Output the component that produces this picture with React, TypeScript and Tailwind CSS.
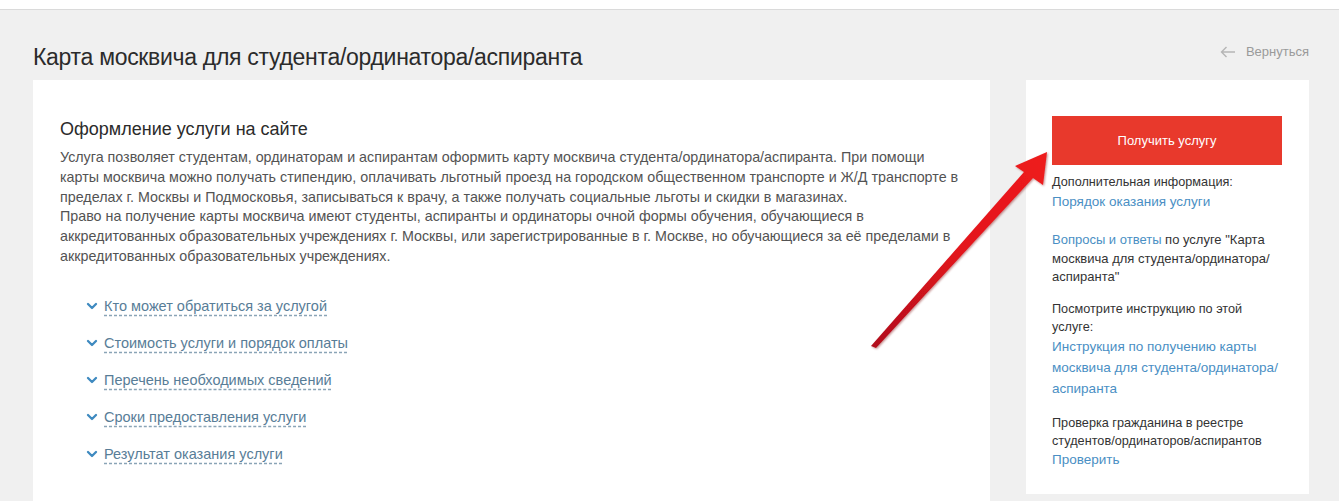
import { ChevronDown } from "lucide-react"

const accordion = [
  "Кто может обратиться за услугой",
  "Стоимость услуги и порядок оплаты",
  "Перечень необходимых сведений",
  "Сроки предоставления услуги",
  "Результат оказания услуги",
]

function RedArrow() {
  // hand-drawn pointer over the page, pointing at the button
  return (
    <svg className="pointer-events-none absolute left-0 top-0" width="1339" height="501" viewBox="0 0 1339 501">
      <defs>
        <linearGradient id="arrowFill" x1="0" y1="1" x2="1" y2="0">
          <stop offset="0" stopColor="#b0101a" />
          <stop offset="0.5" stopColor="#e3131b" />
          <stop offset="1" stopColor="#ee1c1c" />
        </linearGradient>
        <filter id="arrowShadow" x="-10%" y="-10%" width="120%" height="120%">
          <feDropShadow dx="1" dy="1" stdDeviation="1.2" floodColor="#7a0000" floodOpacity="0.45" />
        </filter>
      </defs>
      <polygon
        points="871,346 1024,172 1015,166 1047,152 1043,185 1033,178 876,348"
        fill="url(#arrowFill)"
        filter="url(#arrowShadow)"
      />
    </svg>
  )
}

export default function App() {
  return (
    <div className="relative h-[501px] w-full overflow-hidden bg-[#f0f0f0] font-['Liberation_Sans',Arial,sans-serif]">
      {/* top bar */}
      <div className="h-[10px] border-b border-[#dadada] bg-white"></div>

      {/* title row */}
      <div className="flex items-start justify-between pl-[33px] pr-[30px] pt-[33px]">
        <h1 className="text-[23px] leading-[28px] tracking-[-0.3px] text-[#2b2b2b]">
          Карта москвича для студента/ординатора/аспиранта
        </h1>
        <a className="mt-[-1px] flex items-center gap-[10px] text-[13px] text-[#9a9a9a]">
          <svg width="16" height="12" viewBox="0 0 16 12" fill="none" stroke="#b5b5b5" strokeWidth="1.4">
            <path d="M15 6H1.5M6.5 1L1.5 6l5 5" />
          </svg>
          Вернуться
        </a>
      </div>

      {/* content */}
      <div className="mt-[9px] flex gap-[36px] pl-[33px]">
        <div className="h-[440px] w-[957px] bg-white pl-[27px] pr-[30px] pt-[37px]">
          <h2 className="text-[18px] leading-[24px] text-[#2b2b2b]">Оформление услуги на сайте</h2>
          <p className="mt-[7px] max-w-[900px] text-[14.3px] leading-[19.8px] text-[#535353]">
            Услуга позволяет студентам, ординаторам и аспирантам оформить карту москвича студента/ординатора/аспиранта. При помощи
            карты москвича можно получать стипендию, оплачивать льготный проезд на городском общественном транспорте и Ж/Д транспорте
            в пределах г. Москвы и Подмосковья, записываться к врачу, а также получать социальные льготы и скидки в магазинах.
            <br />
            Право на получение карты москвича имеют студенты, аспиранты и ординаторы очной формы обучения, обучающиеся в
            аккредитованных образовательных учреждениях г. Москвы, или зарегистрированные в г. Москве, но обучающиеся за её пределами в
            аккредитованных образовательных учреждениях.
          </p>

          <ul className="mt-[29px] flex flex-col gap-[17px] pl-[24px]">
            {accordion.map((item) => (
              <li key={item} className="flex items-center gap-[4px] text-[14.5px] leading-[20px]">
                <ChevronDown className="h-[16px] w-[16px] text-[#3f8ac0]" strokeWidth={3.5} />
                <span className="text-[#587d97] underline decoration-[#8aa4b6] decoration-dashed underline-offset-[4px]">
                  {item}
                </span>
              </li>
            ))}
          </ul>
        </div>

        <div className="h-[414px] w-[283px] bg-white pl-[26px] pr-[27px] pt-[36px] text-[12.7px] text-[#333]">
          <button className="h-[49px] w-full bg-[#e8392c] text-[13px] text-white">Получить услугу</button>

          <div className="mt-[8px] leading-[19px]">
            <div>Дополнительная информация:</div>
            <a className="text-[13.5px] text-[#4a8fc4]">Порядок оказания услуги</a>
          </div>

          <div className="mt-[19px] text-[13px] leading-[18.5px]">
            <a className="text-[#4a8fc4]">Вопросы и ответы</a> по услуге "Карта москвича для студента/ординатора/
            аспиранта"
          </div>

          <div className="mt-[13px] leading-[18px]">
            <div>
              Посмотрите инструкцию по этой
              <br />
              услуге:
            </div>
            <a className="block text-[13.5px] leading-[21px] text-[#4a8fc4]">
              Инструкция по получению карты москвича для студента/ординатора/ аспиранта
            </a>
          </div>

          <div className="mt-[15px] leading-[18px]">
            <div>Проверка гражданина в реестре студентов/ординаторов/аспирантов</div>
            <a className="text-[13.5px] leading-[20px] text-[#4a8fc4]">Проверить</a>
          </div>
        </div>
      </div>

      <RedArrow />
    </div>
  )
}
